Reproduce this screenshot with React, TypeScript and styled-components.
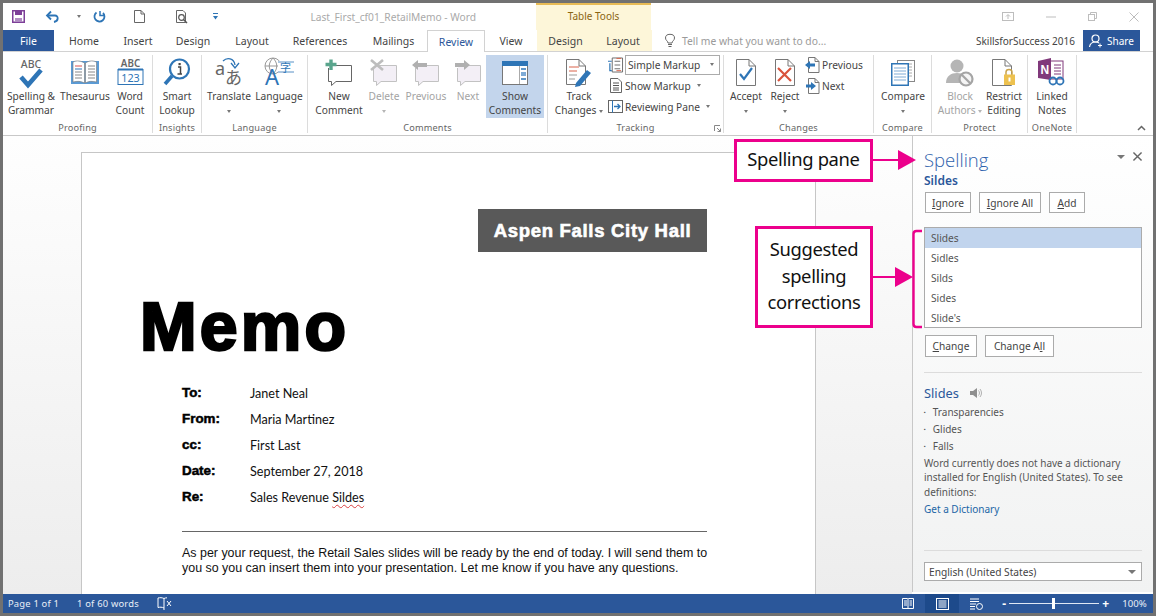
import styled, { createGlobalStyle } from 'styled-components';

const GlobalStyle = createGlobalStyle`
  html, body {
    margin: 0;
    padding: 0;
    background: #fff;
  }
  * {
    box-sizing: border-box;
  }
  svg {
    overflow: visible;
  }
`;

const UI_FONT = `'Noto Sans', 'Open Sans', sans-serif`;
const BLUE = '#2b579a';
const PINK = '#ec008c';

const Frame = styled.div`
  width: 1156px;
  height: 616px;
  border: 3px solid #717171;
  display: flex;
  flex-direction: column;
  overflow: hidden;
  background: #fff;
  font-family: ${UI_FONT};
  font-size: 10px;
  color: #444;
`;

/* title bar */
const TitleBar = styled.div`
  height: 27px;
  flex: none;
  display: flex;
  align-items: center;
  position: relative;
`;

const QuickSlot = styled.div<{ $w: number }>`
  width: ${(p) => p.$w}px;
  flex: none;
  display: flex;
  justify-content: center;
  align-items: center;
  height: 100%;
`;

const DocTitle = styled.div`
  width: 303px;
  flex: none;
  font-size: 10.2px;
  color: #a9a9a9;
  white-space: nowrap;
  text-align: right;
  padding-right: 60px;
`;

const ContextTitle = styled.div`
  width: 115px;
  flex: none;
  height: 100%;
  background: #fdf6d9;
  border-top: 2px solid #e8bb55;
  color: #8a6512;
  font-size: 10px;
  text-align: center;
  padding-top: 4px;
`;

const WindowButtons = styled.div`
  margin-left: auto;
  display: flex;
  align-items: center;
  gap: 32px;
  padding-right: 14px;
`;

/* tabs */
const TabRow = styled.div`
  height: 22px;
  flex: none;
  display: flex;
  border-bottom: 1px solid #d2d2d2;
`;

const FileTab = styled.div`
  width: 51px;
  background: ${BLUE};
  color: #fff;
  font-size: 10.5px;
  display: flex;
  align-items: center;
  justify-content: center;
`;

const Tab = styled.div<{ $w: number; $active?: boolean; $context?: boolean }>`
  width: ${(p) => p.$w}px;
  flex: none;
  font-size: 10.5px;
  color: ${(p) => (p.$active ? BLUE : '#444')};
  display: flex;
  align-items: center;
  justify-content: center;
  background: ${(p) => (p.$context ? '#fdf6d9' : '#fff')};
  ${(p) =>
    p.$active &&
    `
    border: 1px solid #d2d2d2;
    border-bottom: none;
    height: 22px;
  `}
`;

const TellMe = styled.div`
  width: 324px;
  flex: none;
  display: flex;
  align-items: center;
  gap: 7px;
  padding-left: 13px;
  color: #9a9a9a;
  font-size: 10.3px;
  white-space: nowrap;
`;

const UserName = styled.div`
  width: 107px;
  flex: none;
  font-size: 10px;
  color: #444;
  white-space: nowrap;
  display: flex;
  align-items: center;
`;

const ShareButton = styled.div`
  width: 57px;
  height: 21px;
  flex: none;
  background: ${BLUE};
  color: #fff;
  font-size: 10px;
  display: flex;
  align-items: center;
  justify-content: center;
  gap: 4px;
`;

/* ribbon */
const Ribbon = styled.div`
  height: 84px;
  flex: none;
  display: flex;
  padding-top: 3px;
  border-bottom: 1px solid #c8c8c8;
`;

const Group = styled.div<{ $w: number; $pad?: number }>`
  width: ${(p) => p.$w}px;
  flex: none;
  height: 78px;
  border-right: 1px solid #dcdcdc;
  display: flex;
  flex-direction: column;
  padding-left: ${(p) => p.$pad ?? 0}px;
`;

const GroupBody = styled.div`
  flex: 1;
  display: flex;
`;

const GroupLabel = styled.div<{ $pad?: number }>`
  height: 13px;
  font-size: 9.2px;
  letter-spacing: 0.2px;
  color: #666;
  text-align: center;
  line-height: 15px;
  margin-left: ${(p) => -(p.$pad ?? 0)}px;
  white-space: nowrap;
  position: relative;
`;

const DialogMark = styled.svg`
  position: absolute;
  right: 2px;
  top: 5px;
`;

const BigButton = styled.div<{ $w: number; $on?: boolean; $off?: boolean }>`
  width: ${(p) => p.$w}px;
  flex: none;
  height: 63px;
  display: flex;
  flex-direction: column;
  align-items: center;
  background: ${(p) => (p.$on ? '#c3d5ec' : 'transparent')};
  color: ${(p) => (p.$off ? '#a3a3a3' : '#444')};
`;

const IconWrap = styled.div`
  height: 34px;
  flex: none;
  display: flex;
  align-items: center;
  justify-content: center;
  width: 100%;
  padding-top: 1px;
`;

const BigLabel = styled.div`
  font-size: 10.2px;
  line-height: 14px;
  text-align: center;
  white-space: nowrap;
`;

const Caret = styled.span<{ $off?: boolean; $big?: boolean }>`
  display: inline-block;
  width: 0;
  height: 0;
  border-left: ${(p) => (p.$big ? 4 : 2.5)}px solid transparent;
  border-right: ${(p) => (p.$big ? 4 : 2.5)}px solid transparent;
  border-top: ${(p) => (p.$big ? 4 : 3)}px solid ${(p) => (p.$off ? '#b5b5b5' : '#777')};
  vertical-align: middle;
`;

const SmallColumn = styled.div<{ $w: number; $gap?: number }>`
  width: ${(p) => p.$w}px;
  flex: none;
  display: flex;
  flex-direction: column;
  margin: -1px 0 0 ${(p) => p.$gap ?? 0}px;
`;

const SmallRow = styled.div`
  height: 21px;
  display: flex;
  align-items: center;
  gap: 2px;
  font-size: 10.2px;
  white-space: nowrap;
`;

const SmallIcon = styled.div`
  width: 15px;
  flex: none;
  display: flex;
  justify-content: center;
`;

const MenuText = styled.span`
  margin-right: 4px;
`;

const MarkupSelect = styled.div`
  width: 95px;
  height: 20px;
  border: 1px solid #ababab;
  display: flex;
  align-items: center;
  justify-content: space-between;
  padding: 0 5px 0 2px;
  font-size: 10.2px;
`;

const CollapseSlot = styled.div`
  flex: 1;
  display: flex;
  justify-content: flex-end;
  align-items: flex-end;
  padding: 0 7px 4px 0;
`;

/* document */
const Main = styled.div`
  height: 458px;
  flex: none;
  display: flex;
  position: relative;
`;

const DocArea = styled.div`
  width: 909px;
  flex: none;
  overflow: hidden;
  padding: 16px 0 0 78px;
  background: linear-gradient(#fefefe, #ededed);
`;

const Page = styled.div`
  width: 735px;
  height: 480px;
  background: #fff;
  border: 1px solid #c6c6c6;
  padding: 56px 108px 0 59px;
  color: #000;
`;

const HeaderBox = styled.div`
  width: 229px;
  height: 43px;
  margin-left: auto;
  background: #595959;
  color: #fff;
  font-family: 'Liberation Sans', Arial, sans-serif;
  font-weight: 700;
  font-size: 18.5px;
  letter-spacing: 0.7px;
  -webkit-text-stroke: 0.6px #fff;
  display: flex;
  align-items: center;
  justify-content: center;
  white-space: nowrap;
`;

const MemoTitle = styled.div`
  font-family: 'Liberation Sans', Arial, sans-serif;
  font-weight: 700;
  font-size: 68px;
  line-height: 70px;
  margin: 39px 0 0 -1px;
  letter-spacing: 3.2px;
  -webkit-text-stroke: 2.6px #000;
`;

const MemoBlock = styled.div`
  margin: 19px 0 0 41px;
`;

const MemoRow = styled.div`
  height: 26px;
  display: flex;
  align-items: center;
`;

const MemoKey = styled.div`
  width: 68px;
  flex: none;
  font-family: 'Liberation Sans', Arial, sans-serif;
  font-weight: 700;
  font-size: 13.4px;
  -webkit-text-stroke: 0.5px #000;
  margin-top: -1px;
`;

const MemoValue = styled.div`
  font-family: Lato, 'Liberation Sans', sans-serif;
  font-size: 12.6px;
  color: #111;
`;

const Misspelled = styled.span`
  text-decoration: underline wavy #d94040 1px;
  text-underline-offset: 2px;
`;

const MemoRule = styled.div`
  height: 1px;
  background: #666;
  margin-top: 21px;
`;

const MemoParagraph = styled.div`
  margin-top: 14px;
  font-family: 'Liberation Sans', Arial, sans-serif;
  font-size: 12.45px;
  line-height: 14.5px;
  color: #111;
  white-space: nowrap;
`;

/* spelling pane */
const Pane = styled.div`
  flex: 1;
  position: relative;
  padding: 0 11px 0 11px;
  background: linear-gradient(#ffffff, #f1f2f2);
  border-left: 1px solid #c8c8c8;
  margin-bottom: 2px;
  display: flex;
  flex-direction: column;
`;

const PaneHead = styled.div`
  height: 36px;
  display: flex;
  align-items: flex-end;
  justify-content: space-between;
`;

const PaneTitle = styled.div`
  font-family: 'Open Sans', sans-serif;
  font-weight: 300;
  font-size: 18.5px;
  line-height: 24px;
  color: #2f62ad;
`;

const PaneTools = styled.div`
  display: flex;
  align-items: center;
  gap: 8px;
  padding: 0 0 11px 0;
`;

const Word = styled.div`
  font-size: 12px;
  font-weight: 600;
  line-height: 18px;
  height: 20px;
  color: ${BLUE};
`;

const ButtonRow = styled.div`
  display: flex;
  gap: 8px;
  padding-left: 1px;
`;

const PaneButton = styled.div<{ $w: number; $h: number }>`
  width: ${(p) => p.$w}px;
  height: ${(p) => p.$h}px;
  background: #fff;
  border: 1px solid #ababab;
  color: #444;
  font-size: 10.2px;
  display: flex;
  align-items: center;
  justify-content: center;
  white-space: nowrap;
`;

const SuggestionList = styled.div`
  margin-top: 14px;
  height: 101px;
  width: 218px;
  background: #fff;
  border: 1px solid #ababab;
`;

const Suggestion = styled.div<{ $on?: boolean }>`
  height: 20px;
  padding-left: 6px;
  line-height: 20px;
  font-size: 10.2px;
  color: #555;
  background: ${(p) => (p.$on ? '#c1d4ed' : 'transparent')};
`;

const ChangeRow = styled(ButtonRow)`
  margin-top: 7px;
`;

const PaneRule = styled.div<{ $top: number }>`
  height: 1px;
  width: 218px;
  background: #dcdcdc;
  margin-top: ${(p) => p.$top}px;
`;

const DefinitionHead = styled.div`
  display: flex;
  align-items: center;
  gap: 11px;
  margin-top: 8px;
  height: 23px;
  font-size: 12.8px;
  color: ${BLUE};
`;

const Bullet = styled.div`
  height: 17px;
  line-height: 17px;
  font-size: 10px;
  color: #555;
  display: flex;
  gap: 7px;
  &::before {
    content: '▪';
    font-size: 5px;
  }
`;

const Definition = styled.div`
  font-size: 10px;
  line-height: 14.4px;
  color: #555;
  white-space: nowrap;
  margin-top: 1px;
`;

const DictionaryLink = styled.div`
  font-size: 10px;
  line-height: 17px;
  color: #2266a6;
  margin-top: 2px;
`;

const LanguageSelect = styled.div`
  width: 218px;
  height: 19px;
  margin-top: 11px;
  background: #fff;
  border: 1px solid #ababab;
  display: flex;
  align-items: center;
  justify-content: space-between;
  padding: 0 5px 0 4px;
  font-size: 10.2px;
  color: #444;
`;

/* callouts */
const Callout = styled.div<{ $left: number; $top: number; $w: number; $h: number }>`
  position: absolute;
  left: ${(p) => p.$left}px;
  top: ${(p) => p.$top}px;
  width: ${(p) => p.$w}px;
  height: ${(p) => p.$h}px;
  background: #fff;
  border: 3px solid ${PINK};
  color: #111;
  font-size: 18.4px;
  line-height: 26.5px;
  letter-spacing: -0.35px;
  text-align: center;
  display: flex;
  align-items: center;
  justify-content: center;
  padding-bottom: 2px;
`;

const CalloutArrows = styled.svg`
  position: absolute;
  left: 866px;
  top: 0;
`;

/* status bar */
const StatusBar = styled.div`
  height: 19px;
  flex: none;
  background: ${BLUE};
  color: #e8eef7;
  font-size: 9.4px;
  display: flex;
  align-items: center;
  padding-left: 5px;
  white-space: nowrap;
`;

const StatusText = styled.span<{ $w: number }>`
  width: ${(p) => p.$w}px;
  flex: none;
  letter-spacing: 0.2px;
`;

const StatusRight = styled.div`
  margin-left: auto;
  height: 100%;
  display: flex;
  align-items: center;
`;

const ViewSlot = styled.div<{ $w: number; $on?: boolean }>`
  width: ${(p) => p.$w}px;
  height: 100%;
  display: flex;
  align-items: center;
  justify-content: center;
  background: ${(p) => (p.$on ? '#1d4a8b' : 'transparent')};
`;

const ZoomTrack = styled.div`
  width: 90px;
  height: 1px;
  margin: 0 3px;
  background: #dfe8f4;
  position: relative;
`;

const ZoomThumb = styled.div`
  position: absolute;
  left: 43px;
  top: -5px;
  width: 3px;
  height: 11px;
  background: #fff;
`;

const ZoomMark = styled.span<{ $gap?: number }>`
  color: #fff;
  font-size: 12px;
  font-weight: 700;
  line-height: 1;
  margin-left: ${(p) => p.$gap ?? 0}px;
`;

const ZoomValue = styled.span`
  width: 44px;
  padding-left: 7px;
  text-align: center;
  font-size: 9.6px;
`;

const MN = styled.u`
  text-underline-offset: 1px;
`;

/* icons */
const CJK = `'Noto Sans CJK JP', 'Noto Sans', sans-serif`;

const DocShape = ({ x = 0, y = 0, w = 20, h = 26, stroke = '#777' }: any) => (
  <path
    d={`M${x + 0.5} ${y + 0.5}H${x + w - 7}L${x + w - 0.5} ${y + 7}V${y + h - 0.5}H${x + 0.5}Z M${x + w - 7} ${y + 0.5}V${y + 7}H${x + w - 0.5}`}
    fill="#fff"
    stroke={stroke}
  />
);

const SpellingIcon = () => (
  <svg width="30" height="32" viewBox="0 0 30 32">
    <text x="15" y="11" textAnchor="middle" fontSize="10.5" fontFamily="'Noto Sans', sans-serif" fontWeight="500" fill="#666">
      ABC
    </text>
    <path d="M5 20L12 28L25 13" fill="none" stroke="#2e75b6" strokeWidth="4.6" />
  </svg>
);

const ThesaurusIcon = () => (
  <svg width="30" height="28" viewBox="0 0 30 28">
    <rect x="1" y="2" width="28" height="23" fill="#5b9bd5" />
    <path d="M3 3C7 1 11 2 14.5 4V24C11 22 7 22 3 23Z M26.5 3C22 1 18.5 2 15.5 4V24C18.5 22 22 22 26.5 23Z" fill="#fff" stroke="#777" strokeWidth="0.6" />
    <path d="M5 7H12" stroke="#d9534f" />
    <path d="M5 10H12" stroke="#2e75b6" />
    <path d="M5 13H12M5 16H12M5 19H12M18 7H25M18 10H25M18 13H25M18 16H25M18 19H25" stroke="#888" />
  </svg>
);

const WordCountIcon = () => (
  <svg width="27" height="31" viewBox="0 0 27 31">
    <text x="13.5" y="10" textAnchor="middle" fontSize="9.8" fontWeight="600" fontFamily="'Noto Sans', sans-serif" fill="#666">
      ABC
    </text>
    <rect x="1" y="12.5" width="25" height="15" fill="#fff" stroke="#2e75b6" />
    <rect x="1" y="11.5" width="25" height="2" fill="#2e75b6" />
    <text x="13.5" y="25" textAnchor="middle" fontSize="10.8" fontFamily="'Noto Sans', sans-serif" fill="#2e75b6">
      123
    </text>
  </svg>
);

const LookupIcon = () => (
  <svg width="28" height="30" viewBox="0 0 28 30">
    <circle cx="16.5" cy="11" r="9.5" fill="#fff" stroke="#2e75b6" strokeWidth="2.2" />
    <path d="M9 18L2 26" stroke="#2e75b6" strokeWidth="3.6" />
    <path d="M15 9H17.5V16M14.5 16H19" fill="none" stroke="#444" strokeWidth="1.5" />
    <rect x="15.5" y="5" width="2.2" height="2.2" fill="#444" />
  </svg>
);

const TranslateIcon = () => (
  <svg width="30" height="34" viewBox="0 0 30 34">
    <text x="1" y="19" fontSize="18" fontFamily="'Noto Sans', sans-serif" fill="#666">
      a
    </text>
    <text x="11" y="28" fontSize="17" fontFamily={CJK} fill="#666">
      あ
    </text>
    <path d="M9 5C13 1 20 2 21 9" fill="none" stroke="#2e75b6" strokeWidth="1.3" />
    <path d="M17 7L21 12L25 7" fill="none" stroke="#2e75b6" strokeWidth="1.3" />
  </svg>
);

const LanguageIcon = () => (
  <svg width="30" height="34" viewBox="0 0 30 34">
    <circle cx="9" cy="10" r="8" fill="none" stroke="#999" />
    <path d="M1 10H17M9 2C4 7 4 13 9 18M9 2C14 7 14 13 9 18" fill="none" stroke="#999" />
    <text x="1" y="29" fontSize="22" fontFamily="'Noto Sans', sans-serif" fill="#2e75b6">
      A
    </text>
    <rect x="14" y="5" width="16" height="13" fill="#fff" />
    <path d="M14 6H30M14 16H30" stroke="#2e75b6" strokeWidth="0.8" />
    <text x="16" y="15.5" fontSize="11" fontFamily={CJK} fill="#2e75b6">
      字
    </text>
  </svg>
);

const Bubble = ({ off = false }: { off?: boolean }) => (
  <path
    d="M6.5 6.5H26.5V22.5H11L6.5 26.5V22.5H3.5V9"
    fill={off ? '#f3eff6' : '#fff'}
    stroke={off ? '#c2c2c2' : '#666'}
  />
);

const NewCommentIcon = () => (
  <svg width="28" height="28" viewBox="0 0 28 28">
    <Bubble />
    <path d="M6 0.5V11M0.5 5.5H11.5" stroke="#5aa58d" strokeWidth="3.4" />
  </svg>
);

const DeleteCommentIcon = () => (
  <svg width="28" height="28" viewBox="0 0 28 28">
    <Bubble off />
    <path d="M1 1L13 11M13 1L1 11" stroke="#bdbdbd" strokeWidth="2.6" />
  </svg>
);

const PrevCommentIcon = () => (
  <svg width="28" height="28" viewBox="0 0 28 28">
    <Bubble off />
    <path d="M0 6L6 1V4H15V8H6V11Z" fill="#b0b0b0" />
  </svg>
);

const NextCommentIcon = () => (
  <svg width="28" height="28" viewBox="0 0 28 28">
    <Bubble off />
    <path d="M16 6L10 1V4H1V8H10V11Z" fill="#b0b0b0" />
  </svg>
);

const ShowCommentsIcon = () => (
  <svg width="26" height="24" viewBox="0 0 26 24">
    <rect x="0.5" y="0.5" width="25" height="23" fill="#fff" stroke="#777" />
    <rect x="0" y="0" width="26" height="5" fill="#2e75b6" />
    <path d="M17.5 5V23" stroke="#aaa" />
    <path d="M19 8H24M19 12H24M19 18H24" stroke="#2e75b6" strokeWidth="1.5" />
    <rect x="19" y="11" width="5" height="4" fill="#7eabd6" />
  </svg>
);

const TrackChangesIcon = () => (
  <svg width="28" height="30" viewBox="0 0 28 30">
    <DocShape x={1} y={1} w={20} h={26} />
    <path d="M4 9H14M4 13H12" stroke="#d9634a" />
    <path d="M4 17H12M4 21H10" stroke="#999" />
    <path d="M11 25L22 12L26 15L15 28L10 29Z" fill="#2e75b6" />
  </svg>
);

const AcceptIcon = () => (
  <svg width="20" height="27" viewBox="0 0 20 27">
    <DocShape w={20} h={27} />
    <path d="M4 15L8 20L16 9" fill="none" stroke="#2e75b6" strokeWidth="2.2" />
  </svg>
);

const RejectIcon = () => (
  <svg width="20" height="27" viewBox="0 0 20 27">
    <DocShape w={20} h={27} />
    <path d="M3 9L16 22M16 9L3 22" stroke="#d9533c" strokeWidth="2.2" />
  </svg>
);

const SmallDocIcon = ({ dir }: { dir: 'prev' | 'next' }) => (
  <svg width="15" height="16" viewBox="0 0 15 16">
    <path d="M3.5 0.5H10L14 4.5V15.5H3.5Z M10 0.5V4.5H14" fill="#fff" stroke="#777" />
    {dir === 'prev' ? (
      <path d="M0 8L5 4V6.5H10V9.5H5V12Z" fill="#2e75b6" />
    ) : (
      <path d="M11 8L6 4V6.5H1V9.5H6V12Z" fill="#2e75b6" />
    )}
  </svg>
);

const MarkupIcon = () => (
  <svg width="15" height="16" viewBox="0 0 16 16">
    <path d="M4.5 0.5H15.5V15.5H4.5Z" fill="#fff" stroke="#666" />
    <path d="M7 4H13M7 8H13M7 12H13" stroke="#666" />
    <path d="M0 4H4M2 6V14H4" fill="none" stroke="#2e75b6" strokeWidth="1.3" />
    <path d="M9 1H14M9 14H14" stroke="#d9634a" />
  </svg>
);

const ShowMarkupIcon = () => (
  <svg width="12" height="15" viewBox="0 0 12 15">
    <path d="M0.5 0.5H8L11.5 4V14.5H0.5Z" fill="#fff" stroke="#666" />
    <path d="M3 5H9M3 7.5H9M3 10H9M3 12H9" stroke="#555" />
  </svg>
);

const ReviewPaneIcon = () => (
  <svg width="15" height="13" viewBox="0 0 15 13">
    <rect x="0.5" y="0.5" width="14" height="12" fill="#fff" stroke="#666" />
    <path d="M4.5 0.5V12.5" stroke="#2e75b6" />
    <path d="M6 6.5H12M9.5 4L12 6.5L9.5 9" fill="none" stroke="#2e75b6" strokeWidth="1.3" />
  </svg>
);

const CompareIcon = () => (
  <svg width="24" height="26" viewBox="0 0 24 26">
    <rect x="6.5" y="0.5" width="17" height="21" fill="#fff" stroke="#888" />
    <path d="M17 4H21M17 7H21M17 10H21M17 13H21M17 16H21" stroke="#aaa" />
    <rect x="0.75" y="3.75" width="16.5" height="21.5" fill="#fff" stroke="#2e75b6" strokeWidth="1.5" />
    <path d="M3 8H15M3 11H15M3 14H15M3 17H15M3 20H15" stroke="#7eabd6" />
  </svg>
);

const BlockAuthorsIcon = () => (
  <svg width="28" height="28" viewBox="0 0 28 28">
    <circle cx="11" cy="7" r="6.5" fill="#b5b5b5" />
    <path d="M0 24C0 17 5 14 11 14C17 14 22 17 22 24Z" fill="#b5b5b5" />
    <circle cx="20" cy="20" r="6.5" fill="#f5f5f5" stroke="#a5a5a5" strokeWidth="2.2" />
    <path d="M15.5 15.5L24.5 24.5" stroke="#a5a5a5" strokeWidth="2.2" />
  </svg>
);

const RestrictIcon = () => (
  <svg width="24" height="28" viewBox="0 0 24 28">
    <DocShape w={20} h={27} />
    <path d="M14 16V13C14 9.5 20 9.5 20 13V16" fill="none" stroke="#c9a44c" strokeWidth="1.5" />
    <rect x="12" y="15.5" width="11" height="10.5" fill="#edc14f" />
    <rect x="16.5" y="18.5" width="2" height="4" fill="#fff" />
  </svg>
);

const OneNoteIcon = () => (
  <svg width="28" height="29" viewBox="0 0 28 29">
    <rect x="11" y="3" width="14" height="18" fill="#fff" stroke="#80397b" />
    <path d="M16 7H23M16 10H23M16 13H23M16 16H23" stroke="#80397b" />
    <path d="M0 3L13 0V22L0 20Z" fill="#80397b" />
    <text x="2.5" y="16" fontSize="12" fontWeight="700" fontFamily="'Liberation Sans', sans-serif" fill="#fff">
      N
    </text>
    <circle cx="15" cy="23" r="3.5" fill="none" stroke="#2e75b6" strokeWidth="1.8" />
    <circle cx="22" cy="23" r="3.5" fill="none" stroke="#2e75b6" strokeWidth="1.8" />
  </svg>
);

const SaveIcon = () => (
  <svg width="13" height="13" viewBox="0 0 13 13">
    <path d="M0.75 0.75H12.25V12.25H0.75Z" fill="none" stroke="#7d3f98" strokeWidth="1.5" />
    <rect x="3" y="1" width="7" height="4" fill="#7d3f98" />
    <rect x="3" y="8" width="7" height="4" fill="#b08cc2" />
  </svg>
);

const UndoIcon = () => (
  <svg width="14" height="12" viewBox="0 0 14 12">
    <path d="M2 4.5H9C12.5 4.5 13 10 8 11" fill="none" stroke="#2e75b6" strokeWidth="1.8" />
    <path d="M5 0.5L1 4.5L5 8.5" fill="none" stroke="#2e75b6" strokeWidth="1.8" />
  </svg>
);

const RedoIcon = () => (
  <svg width="12" height="13" viewBox="0 0 12 13">
    <path d="M3.5 2.5A5 5 0 1 0 10 3" fill="none" stroke="#2e75b6" strokeWidth="1.8" />
    <path d="M7 1V5.5H11.5" fill="none" stroke="#2e75b6" strokeWidth="1.5" />
  </svg>
);

const NewDocIcon = () => (
  <svg width="11" height="13" viewBox="0 0 11 13">
    <path d="M0.5 0.5H7L10.5 4V12.5H0.5Z M7 0.5V4H10.5" fill="#fff" stroke="#666" />
  </svg>
);

const PreviewIcon = () => (
  <svg width="13" height="14" viewBox="0 0 13 14">
    <path d="M0.5 0.5H7L9.5 3V12.5H0.5Z" fill="#fff" stroke="#666" />
    <circle cx="5.5" cy="7.5" r="2.8" fill="#fff" stroke="#555" strokeWidth="1.2" />
    <path d="M7.5 9.5L11 13" stroke="#555" strokeWidth="1.5" />
  </svg>
);

const CustomizeIcon = () => (
  <svg width="5" height="7" viewBox="0 0 5 7">
    <path d="M0 0.5H5" stroke="#2e75b6" />
    <path d="M0 3L5 3L2.5 6.5Z" fill="#2e75b6" />
  </svg>
);

const RibbonDisplayIcon = () => (
  <svg width="12" height="9" viewBox="0 0 12 9">
    <rect x="0.5" y="0.5" width="11" height="8" fill="none" stroke="#bdbdbd" />
    <path d="M6 7V3M4 4.5L6 2.5L8 4.5" fill="none" stroke="#bdbdbd" />
  </svg>
);

const MinIcon = () => (
  <svg width="10" height="2" viewBox="0 0 10 2">
    <path d="M0 1H10" stroke="#bdbdbd" />
  </svg>
);

const RestoreIcon = () => (
  <svg width="9" height="9" viewBox="0 0 9 9">
    <path d="M2.5 2V0.5H8.5V6.5H7" fill="none" stroke="#bdbdbd" />
    <rect x="0.5" y="2.5" width="6" height="6" fill="none" stroke="#bdbdbd" />
  </svg>
);

const CloseIcon = ({ c = '#bdbdbd', s = 10, w = 1 }: any) => (
  <svg width={s} height={s} viewBox="0 0 10 10">
    <path d="M0.5 0.5L9.5 9.5M9.5 0.5L0.5 9.5" stroke={c} strokeWidth={w} />
  </svg>
);

const BulbIcon = () => (
  <svg width="10" height="13" viewBox="0 0 10 13">
    <path d="M3 9C3 7 0.5 6.5 0.5 4A4.5 3.7 0 0 1 9.5 4C9.5 6.5 7 7 7 9Z" fill="none" stroke="#666" />
    <path d="M3 10.5H7M3.5 12.5H6.5" stroke="#666" />
  </svg>
);

const PersonIcon = () => (
  <svg width="14" height="14" viewBox="0 0 14 14">
    <circle cx="6.5" cy="4.5" r="3.5" fill="none" stroke="#fff" strokeWidth="1.2" />
    <path d="M0.5 13C1 9.5 3 8 6.5 8C8 8 9 8.3 10 9" fill="none" stroke="#fff" strokeWidth="1.2" />
    <path d="M11 9.5V13.5M9 11.5H13" stroke="#fff" />
  </svg>
);

const SpeakerIcon = () => (
  <svg width="12" height="10" viewBox="0 0 12 10">
    <path d="M0 3H3L7 0V10L3 7H0Z" fill="#8f8f8f" />
    <path d="M8.5 2.5C9.8 4 9.8 6 8.5 7.5M10 1C12 3.5 12 6.5 10 9" fill="none" stroke="#b0b0b0" />
  </svg>
);

const ReadModeIcon = () => (
  <svg width="12" height="11" viewBox="0 0 12 11">
    <path d="M0.5 0.5H5.5L6 1L6.5 0.5H11.5V10.5H0.5Z M6 1V10.5" fill="none" stroke="#fff" />
    <path d="M2 3H5M2 5H5M2 7H5M7.5 3H10M7.5 5H10M7.5 7H10" stroke="#fff" />
  </svg>
);

const PrintLayoutIcon = () => (
  <svg width="13" height="12" viewBox="0 0 13 12">
    <rect x="0.5" y="0.5" width="12" height="11" fill="none" stroke="#fff" />
    <path d="M2.5 3H10.5M2.5 5H10.5M2.5 7H10.5M2.5 9H10.5" stroke="#fff" />
  </svg>
);

const WebLayoutIcon = () => (
  <svg width="13" height="12" viewBox="0 0 13 12">
    <path d="M0 1H9M0 3.5H9M0 6H6M0 8.5H5M0 11H5" stroke="#fff" />
    <circle cx="9.5" cy="8.5" r="3" fill="none" stroke="#fff" />
  </svg>
);

const ProofIcon = () => (
  <svg width="15" height="13" viewBox="0 0 15 13">
    <path d="M7 1.5C5 0.5 3 0.5 1 1V10.5C3 10 5 10 7 11M7 1.5V13" fill="none" stroke="#fff" />
    <path d="M7 1.5C8 1 9 0.8 10 0.8" fill="none" stroke="#fff" />
    <path d="M10 4L14 9M14 4L10 9" stroke="#fff" />
  </svg>
);

const DialogIcon = () => (
  <DialogMark width="7" height="7" viewBox="0 0 7 7">
    <path d="M0.5 6V0.5H6" fill="none" stroke="#888" />
    <path d="M3 3L6.5 6.5M6.5 3.5V6.5H3.5" fill="none" stroke="#888" />
  </DialogMark>
);

const CollapseIcon = () => (
  <svg width="9" height="6" viewBox="0 0 9 6">
    <path d="M1 5L4.5 1.5L8 5" fill="none" stroke="#666" strokeWidth="1.5" />
  </svg>
);

const ArrowsOverlay = () => (
  <CalloutArrows width="60" height="200" viewBox="0 0 60 200">
    <path d="M4 24H30" stroke={PINK} strokeWidth="2" />
    <path d="M29 14L47 24L29 34Z" fill={PINK} />
    <path d="M4 141H28" stroke={PINK} strokeWidth="2" />
    <path d="M26 131L44 141L26 151Z" fill={PINK} />
    <path d="M53 95H47.5Q44.5 95 44.5 98V188Q44.5 191 47.5 191H53" fill="none" stroke={PINK} strokeWidth="2.4" />
  </CalloutArrows>
);

export default function App() {
  return (
    <>
      <GlobalStyle />
      <Frame>
        <TitleBar>
          <QuickSlot $w={31}>
            <SaveIcon />
          </QuickSlot>
          <QuickSlot $w={37}>
            <UndoIcon />
          </QuickSlot>
          <QuickSlot $w={16}>
            <Caret />
          </QuickSlot>
          <QuickSlot $w={24}>
            <RedoIcon />
          </QuickSlot>
          <QuickSlot $w={56}>
            <NewDocIcon />
          </QuickSlot>
          <QuickSlot $w={30}>
            <PreviewIcon />
          </QuickSlot>
          <QuickSlot $w={36}>
            <CustomizeIcon />
          </QuickSlot>
          <DocTitle>Last_First_cf01_RetailMemo - Word</DocTitle>
          <ContextTitle>Table Tools</ContextTitle>
          <WindowButtons>
            <RibbonDisplayIcon />
            <MinIcon />
            <RestoreIcon />
            <CloseIcon />
          </WindowButtons>
        </TitleBar>

        <TabRow>
          <FileTab>File</FileTab>
          <Tab $w={60}>Home</Tab>
          <Tab $w={48}>Insert</Tab>
          <Tab $w={62}>Design</Tab>
          <Tab $w={56}>Layout</Tab>
          <Tab $w={80}>References</Tab>
          <Tab $w={67}>Mailings</Tab>
          <Tab $w={58} $active>
            Review
          </Tab>
          <Tab $w={52}>View</Tab>
          <Tab $w={57} $context>
            Design
          </Tab>
          <Tab $w={58} $context>
            Layout
          </Tab>
          <TellMe>
            <BulbIcon />
            Tell me what you want to do...
          </TellMe>
          <UserName>SkillsforSuccess 2016</UserName>
          <ShareButton>
            <PersonIcon />
            Share
          </ShareButton>
        </TabRow>

        <Ribbon>
          <Group $w={150}>
            <GroupBody>
              <BigButton $w={56}>
                <IconWrap>
                  <SpellingIcon />
                </IconWrap>
                <BigLabel>
                  Spelling &amp;
                  <br />
                  Grammar
                </BigLabel>
              </BigButton>
              <BigButton $w={52}>
                <IconWrap>
                  <ThesaurusIcon />
                </IconWrap>
                <BigLabel>Thesaurus</BigLabel>
              </BigButton>
              <BigButton $w={38}>
                <IconWrap>
                  <WordCountIcon />
                </IconWrap>
                <BigLabel>
                  Word
                  <br />
                  Count
                </BigLabel>
              </BigButton>
            </GroupBody>
            <GroupLabel>Proofing</GroupLabel>
          </Group>

          <Group $w={49}>
            <GroupBody>
              <BigButton $w={48}>
                <IconWrap>
                  <LookupIcon />
                </IconWrap>
                <BigLabel>
                  Smart
                  <br />
                  Lookup
                </BigLabel>
              </BigButton>
            </GroupBody>
            <GroupLabel>Insights</GroupLabel>
          </Group>

          <Group $w={106}>
            <GroupBody>
              <BigButton $w={54}>
                <IconWrap>
                  <TranslateIcon />
                </IconWrap>
                <BigLabel>
                  Translate
                  <br />
                  <Caret />
                </BigLabel>
              </BigButton>
              <BigButton $w={46}>
                <IconWrap>
                  <LanguageIcon />
                </IconWrap>
                <BigLabel>
                  Language
                  <br />
                  <Caret />
                </BigLabel>
              </BigButton>
            </GroupBody>
            <GroupLabel>Language</GroupLabel>
          </Group>

          <Group $w={240} $pad={4}>
            <GroupBody>
              <BigButton $w={54}>
                <IconWrap>
                  <NewCommentIcon />
                </IconWrap>
                <BigLabel>
                  New
                  <br />
                  Comment
                </BigLabel>
              </BigButton>
              <BigButton $w={36} $off>
                <IconWrap>
                  <DeleteCommentIcon />
                </IconWrap>
                <BigLabel>
                  Delete
                  <br />
                  <Caret $off />
                </BigLabel>
              </BigButton>
              <BigButton $w={48} $off>
                <IconWrap>
                  <PrevCommentIcon />
                </IconWrap>
                <BigLabel>Previous</BigLabel>
              </BigButton>
              <BigButton $w={36} $off>
                <IconWrap>
                  <NextCommentIcon />
                </IconWrap>
                <BigLabel>Next</BigLabel>
              </BigButton>
              <BigButton $w={58} $on>
                <IconWrap>
                  <ShowCommentsIcon />
                </IconWrap>
                <BigLabel>
                  Show
                  <br />
                  Comments
                </BigLabel>
              </BigButton>
            </GroupBody>
            <GroupLabel $pad={4}>Comments</GroupLabel>
          </Group>

          <Group $w={176} $pad={2}>
            <GroupBody>
              <BigButton $w={58}>
                <IconWrap>
                  <TrackChangesIcon />
                </IconWrap>
                <BigLabel>
                  Track
                  <br />
                  Changes <Caret />
                </BigLabel>
              </BigButton>
              <SmallColumn $w={114}>
                <SmallRow>
                  <SmallIcon>
                    <MarkupIcon />
                  </SmallIcon>
                  <MarkupSelect>
                    Simple Markup
                    <Caret />
                  </MarkupSelect>
                </SmallRow>
                <SmallRow>
                  <SmallIcon>
                    <ShowMarkupIcon />
                  </SmallIcon>
                  <MenuText>Show Markup</MenuText>
                  <Caret />
                </SmallRow>
                <SmallRow>
                  <SmallIcon>
                    <ReviewPaneIcon />
                  </SmallIcon>
                  <MenuText>Reviewing Pane</MenuText>
                  <Caret />
                </SmallRow>
              </SmallColumn>
            </GroupBody>
            <GroupLabel $pad={2}>
              Tracking
              <DialogIcon />
            </GroupLabel>
          </Group>

          <Group $w={150} $pad={2}>
            <GroupBody>
              <BigButton $w={40}>
                <IconWrap>
                  <AcceptIcon />
                </IconWrap>
                <BigLabel>
                  Accept
                  <br />
                  <Caret />
                </BigLabel>
              </BigButton>
              <BigButton $w={38}>
                <IconWrap>
                  <RejectIcon />
                </IconWrap>
                <BigLabel>
                  Reject
                  <br />
                  <Caret />
                </BigLabel>
              </BigButton>
              <SmallColumn $w={66} $gap={1}>
                <SmallRow>
                  <SmallIcon>
                    <SmallDocIcon dir="prev" />
                  </SmallIcon>
                  Previous
                </SmallRow>
                <SmallRow>
                  <SmallIcon>
                    <SmallDocIcon dir="next" />
                  </SmallIcon>
                  Next
                </SmallRow>
              </SmallColumn>
            </GroupBody>
            <GroupLabel $pad={2}>Changes</GroupLabel>
          </Group>

          <Group $w={58}>
            <GroupBody>
              <BigButton $w={58}>
                <IconWrap>
                  <CompareIcon />
                </IconWrap>
                <BigLabel>
                  Compare
                  <br />
                  <Caret />
                </BigLabel>
              </BigButton>
            </GroupBody>
            <GroupLabel>Compare</GroupLabel>
          </Group>

          <Group $w={96} $pad={4}>
            <GroupBody>
              <BigButton $w={48} $off>
                <IconWrap>
                  <BlockAuthorsIcon />
                </IconWrap>
                <BigLabel>
                  Block
                  <br />
                  Authors <Caret $off />
                </BigLabel>
              </BigButton>
              <BigButton $w={40}>
                <IconWrap>
                  <RestrictIcon />
                </IconWrap>
                <BigLabel>
                  Restrict
                  <br />
                  Editing
                </BigLabel>
              </BigButton>
            </GroupBody>
            <GroupLabel $pad={4}>Protect</GroupLabel>
          </Group>

          <Group $w={49}>
            <GroupBody>
              <BigButton $w={48}>
                <IconWrap>
                  <OneNoteIcon />
                </IconWrap>
                <BigLabel>
                  Linked
                  <br />
                  Notes
                </BigLabel>
              </BigButton>
            </GroupBody>
            <GroupLabel>OneNote</GroupLabel>
          </Group>

          <CollapseSlot>
            <CollapseIcon />
          </CollapseSlot>
        </Ribbon>

        <Main>
          <DocArea>
            <Page>
              <HeaderBox>Aspen Falls City Hall</HeaderBox>
              <MemoTitle>Memo</MemoTitle>
              <MemoBlock>
                <MemoRow>
                  <MemoKey>To:</MemoKey>
                  <MemoValue>Janet Neal</MemoValue>
                </MemoRow>
                <MemoRow>
                  <MemoKey>From:</MemoKey>
                  <MemoValue>Maria Martinez</MemoValue>
                </MemoRow>
                <MemoRow>
                  <MemoKey>cc:</MemoKey>
                  <MemoValue>First Last</MemoValue>
                </MemoRow>
                <MemoRow>
                  <MemoKey>Date:</MemoKey>
                  <MemoValue>September 27, 2018</MemoValue>
                </MemoRow>
                <MemoRow>
                  <MemoKey>Re:</MemoKey>
                  <MemoValue>
                    Sales Revenue <Misspelled>Sildes</Misspelled>
                  </MemoValue>
                </MemoRow>
                <MemoRule />
                <MemoParagraph>
                  As per your request, the Retail Sales slides will be ready by the end of today. I will send them to
                  <br />
                  you so you can insert them into your presentation. Let me know if you have any questions.
                </MemoParagraph>
              </MemoBlock>
            </Page>
          </DocArea>

          <Pane>
            <PaneHead>
              <PaneTitle>Spelling</PaneTitle>
              <PaneTools>
                <Caret $big />
                <CloseIcon c="#666" s={9} w={1.6} />
              </PaneTools>
            </PaneHead>
            <Word>Sildes</Word>
            <ButtonRow>
              <PaneButton $w={46} $h={21}>
                <span>
                  <MN>I</MN>gnore
                </span>
              </PaneButton>
              <PaneButton $w={62} $h={21}>
                <span>
                  <MN>I</MN>gnore All
                </span>
              </PaneButton>
              <PaneButton $w={36} $h={21}>
                <span>
                  <MN>A</MN>dd
                </span>
              </PaneButton>
            </ButtonRow>
            <SuggestionList>
              <Suggestion $on>Slides</Suggestion>
              <Suggestion>Sidles</Suggestion>
              <Suggestion>Silds</Suggestion>
              <Suggestion>Sides</Suggestion>
              <Suggestion>Slide's</Suggestion>
            </SuggestionList>
            <ChangeRow>
              <PaneButton $w={52} $h={22}>
                <span>
                  <MN>C</MN>hange
                </span>
              </PaneButton>
              <PaneButton $w={69} $h={22}>
                <span>
                  Change A<MN>l</MN>l
                </span>
              </PaneButton>
            </ChangeRow>
            <PaneRule $top={15} />
            <DefinitionHead>
              Slides
              <SpeakerIcon />
            </DefinitionHead>
            <Bullet>Transparencies</Bullet>
            <Bullet>Glides</Bullet>
            <Bullet>Falls</Bullet>
            <Definition>
              Word currently does not have a dictionary
              <br />
              installed for English (United States). To see
              <br />
              definitions:
            </Definition>
            <DictionaryLink>Get a Dictionary</DictionaryLink>
            <PaneRule $top={32} />
            <LanguageSelect>
              English (United States)
              <Caret $big />
            </LanguageSelect>
          </Pane>

          <Callout $left={731} $top={3} $w={139} $h={43}>
            Spelling pane
          </Callout>
          <Callout $left={752} $top={90} $w={118} $h={102}>
            Suggested
            <br />
            spelling
            <br />
            corrections
          </Callout>
          <ArrowsOverlay />
        </Main>

        <StatusBar>
          <StatusText $w={69}>Page 1 of 1</StatusText>
          <StatusText $w={80}>1 of 60 words</StatusText>
          <ProofIcon />
          <StatusRight>
            <ViewSlot $w={35}>
              <ReadModeIcon />
            </ViewSlot>
            <ViewSlot $w={34} $on>
              <PrintLayoutIcon />
            </ViewSlot>
            <ViewSlot $w={34}>
              <WebLayoutIcon />
            </ViewSlot>
            <ZoomMark $gap={9}>-</ZoomMark>
            <ZoomTrack>
              <ZoomThumb />
            </ZoomTrack>
            <ZoomMark>+</ZoomMark>
            <ZoomValue>100%</ZoomValue>
          </StatusRight>
        </StatusBar>
      </Frame>
    </>
  );
}
